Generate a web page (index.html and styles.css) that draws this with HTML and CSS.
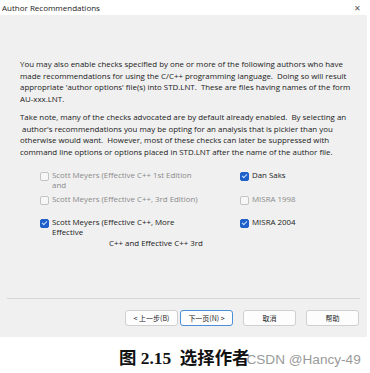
FILE: index.html
```html
<!DOCTYPE html>
<html lang="en">
<head>
  <meta charset="UTF-8">
  <title>Author Recommendations</title>
  <link rel="stylesheet" href="styles.css">
</head>
<body>
  <div class="dialog">
    <div class="titlebar">
      <span class="title">Author Recommendations</span>
      <span class="close">&#x2715;</span>
    </div>

    <div class="content">
      <p>You may also enable checks specified by one or more of the following authors who have<br>made recommendations for using the C/C++ programming language.&nbsp; Doing so will result<br>appropriate 'author options' file(s) into STD.LNT.&nbsp; These are files having names of the form<br>AU-xxx.LNT.</p>
      <p>Take note, many of the checks advocated are by default already enabled.&nbsp; By selecting an<br>&nbsp;author's recommendations you may be opting for an analysis that is pickier than you<br>otherwise would want.&nbsp; However, most of these checks can later be suppressed with<br>command line options or options placed in STD.LNT after the name of the author file.</p>

      <div class="checks">
        <div class="col">
          <label class="check disabled"><span class="box"></span><span class="lbl">Scott Meyers (Effective C++ 1st Edition<br>and</span></label>
          <label class="check disabled"><span class="box"></span><span class="lbl">Scott Meyers (Effective C++, 3rd Edition)</span></label>
          <label class="check last"><span class="box on"></span><span class="lbl">Scott Meyers (Effective C++, More<br>Effective<br><span class="indent">C++ and Effective C++ 3rd</span></span></label>
        </div>
        <div class="col">
          <label class="check"><span class="box on"></span><span class="lbl">Dan Saks</span></label>
          <label class="check disabled"><span class="box"></span><span class="lbl">MISRA 1998</span></label>
          <label class="check last"><span class="box on"></span><span class="lbl">MISRA 2004</span></label>
        </div>
      </div>
    </div>

    <div class="footer">
      <button class="btn">&lt; 上一步(B)</button>
      <button class="btn default">下一页(N) &gt;</button>
      <button class="btn gap">取消</button>
      <button class="btn gap">帮助</button>
    </div>
  </div>

  <div class="caption">
    <span class="fig">图 2.15&nbsp; 选择作者</span><span class="mark">CSDN @Hancy-49</span>
  </div>
</body>
</html>
```

FILE: styles.css
```css
body {
  margin: 0;
  background: #ffffff;
  font-family: "Open Sans", "Noto Sans CJK SC", sans-serif;
}

.dialog {
  width: 367px;
  height: 337px;
  background: #f0f0f0;
  display: flex;
  flex-direction: column;
}

.titlebar {
  height: 15px;
  background: #ffffff;
  display: flex;
  align-items: center;
  justify-content: space-between;
  padding: 0 6px 0 2px;
}

.title {
  font-size: 8px;
  color: #1a1a1a;
}

.close {
  font-size: 8px;
  color: #555;
}

.content {
  padding: 44px 10px 0 20px;
  flex: 1;
  font-size: 7.9px;
  color: #1a1a1a;
  white-space: nowrap;
}

.content p {
  margin: 0 0 6px;
  line-height: 11.7px;
}

.checks {
  display: flex;
  margin-top: 11px;
  padding-left: 20px;
}

.col {
  display: flex;
  flex-direction: column;
  gap: 2px;
}

.col:first-child {
  width: 200px;
}

.check {
  display: flex;
  align-items: flex-start;
  gap: 3px;
  line-height: 10.5px;
  min-height: 22px;
  color: #1a1a1a;
}

.check.last {
  margin-top: -1px;
}

.check.disabled {
  color: #8a8a8a;
}

.box {
  width: 7px;
  height: 7px;
  margin-top: 2px;
  border: 1px solid #c4c4c4;
  border-radius: 2px;
  background: #f7f7f7;
  flex-shrink: 0;
}

.box.on {
  background: #1d60c9;
  border-color: #1d60c9;
  position: relative;
}

.box.on::after {
  content: "";
  position: absolute;
  left: 2px;
  top: 0px;
  width: 2px;
  height: 4px;
  border: solid #cfe0ff;
  border-width: 0 1px 1px 0;
  transform: rotate(45deg);
}

.indent {
  padding-left: 57px;
}

.footer {
  margin: 0 7px;
  border-top: 1px solid #d6d6d6;
  height: 38px;
  display: flex;
  align-items: center;
  justify-content: flex-end;
  gap: 2px;
  padding-right: 1px;
}

.btn {
  width: 53px;
  height: 16px;
  padding: 0;
  font-family: "Noto Sans CJK SC", sans-serif;
  font-size: 7px;
  color: #222;
  background: #fdfdfd;
  border: 1px solid #d0d0d0;
  border-radius: 3px;
}

.btn.default {
  border-color: #4a8fd8;
}

.btn.gap {
  margin-left: 8px;
}

.caption {
  display: flex;
  align-items: baseline;
  padding: 7px 0 0 119px;
}

.fig {
  font-family: "Liberation Serif", "Noto Sans CJK SC", serif;
  font-weight: bold;
  font-size: 17.4px;
  color: #111;
}

.mark {
  font-family: "Liberation Sans", sans-serif;
  font-size: 13.6px;
  color: #9a9a9a;
  margin-left: -3px;
}
```
